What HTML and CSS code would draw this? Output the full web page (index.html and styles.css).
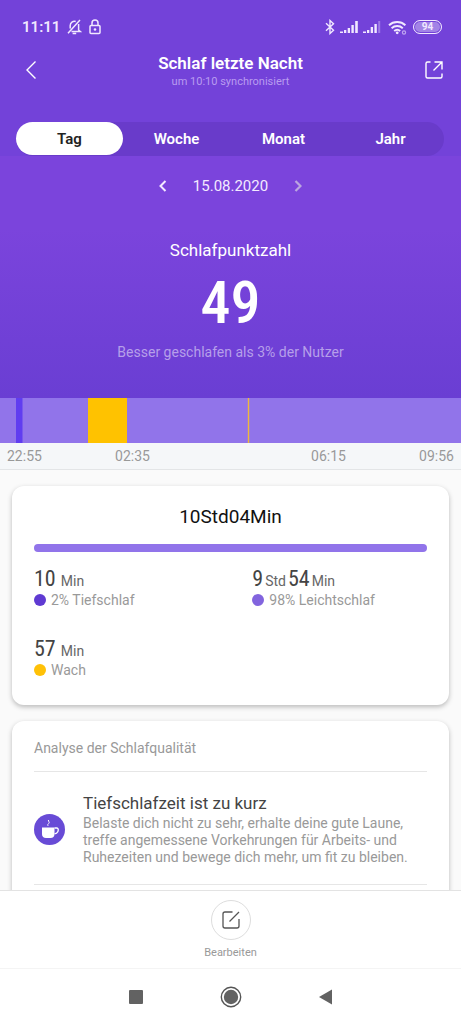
FILE: index.html
```html
<!DOCTYPE html>
<html lang="de">
<head>
<meta charset="utf-8">
<meta name="viewport" content="width=device-width, initial-scale=1">
<title>Schlaf letzte Nacht</title>
<link rel="stylesheet" href="styles.css">
</head>
<body>
<div class="app">
  <header class="top">
    <div class="status">
      <div class="status-group">
        <span class="clock">11:11</span>
        <svg width="15" height="16" viewBox="0 0 15 16" fill="none" stroke="currentColor" stroke-width="1.5"><path d="M3.200 9.500V6.500a4.300 4.300 0 0 1 5.500-4M11.600 5v6l1.600 1.400H4.500M1 14.200L13 1M5.600 14.400h3.600"/></svg>
        <svg width="12" height="16" viewBox="0 0 12 16" fill="none" stroke="currentColor" stroke-width="1.5"><rect x="1" y="6.5" width="10" height="8" rx="1"/><path d="M3 6.500V4a3 3 0 0 1 6 0v2.500"/><circle cx="6" cy="10.500" r="1.300" fill="currentColor" stroke="none"/></svg>
      </div>
      <div class="status-group signals">
        <svg width="10" height="16" viewBox="0 0 10 16" fill="none" stroke="currentColor" stroke-width="1.400"><path d="M1 4.300l7.500 7L5 14.500v-13l3.500 3.200L1 11.700"/></svg>
        <svg width="18" height="14" viewBox="0 0 18 14" fill="currentColor"><path d="M0 11.500h3V13H0zM4 10h2.300v3H4zM7.700 8H10v5H7.700zM11.400 5h2.400v8h-2.400zM15.200 1h2.600v12h-2.600z"/></svg>
        <svg width="18" height="14" viewBox="0 0 18 14" fill="currentColor"><path d="M0 11.500h3V13H0zM4 10h2.300v3H4zM7.700 7H10v6H7.700zM11.400 4h2.400v9h-2.400z"/><path d="M15.200 1h2v12h-2z" opacity=".35"/></svg>
        <svg class="wifi" width="19" height="15" viewBox="0 0 19 15" fill="none" stroke="currentColor" stroke-width="1.900"><path d="M1 5.300a12 12 0 0 1 16.400 0M3.600 8.200a8.200 8.200 0 0 1 11.200 0M6.200 11a4.500 4.500 0 0 1 6 0"/><circle cx="9.200" cy="12.800" r="1.400" fill="currentColor" stroke="none"/><circle cx="16" cy="12.500" r="1.600" stroke-width="1.200" opacity=".6"/></svg>
        <span class="battery">94</span>
      </div>
    </div>
    <div class="titlebar">
      <button class="icon-button" aria-label="Zurück"><svg width="12" height="20" viewBox="0 0 12 20" fill="none" stroke="currentColor" stroke-width="1.400"><path d="M10.500 1.500L2 10l8.500 8.500"/></svg></button>
      <div class="heading">
        <h1>Schlaf letzte Nacht</h1>
        <p>um 10:10 synchronisiert</p>
      </div>
      <button class="icon-button end" aria-label="Teilen"><svg width="18" height="18" viewBox="0 0 18 18" fill="none" stroke="currentColor" stroke-width="1.400"><path d="M5.500 1H2.500A1.500 1.500 0 0 0 1 2.500v13A1.500 1.500 0 0 0 2.500 17h13a1.500 1.500 0 0 0 1.500-1.500v-3M9.500 1H17v7.500M17 1L8.500 9.500"/></svg></button>
    </div>
    <nav class="tabs">
      <button class="tab active">Tag</button>
      <button class="tab">Woche</button>
      <button class="tab">Monat</button>
      <button class="tab">Jahr</button>
    </nav>
  </header>

  <main class="content">
    <section class="hero">
      <div class="date">
        <button aria-label="Vorheriger Tag"><svg width="8" height="12" viewBox="0 0 8 12" fill="none" stroke="currentColor" stroke-width="2"><path d="M6.500 1L1.500 6l5 5"/></svg></button>
        <span>15.08.2020</span>
        <button class="next" aria-label="Nächster Tag"><svg width="8" height="12" viewBox="0 0 8 12" fill="none" stroke="currentColor" stroke-width="2.200"><path d="M1.500 1l5 5-5 5"/></svg></button>
      </div>
      <h2>Schlafpunktzahl</h2>
      <div class="score">49</div>
      <p class="compare">Besser geschlafen als 3% der Nutzer</p>
    </section>

    <svg class="timeline" viewBox="0 0 461 44" preserveAspectRatio="none" aria-hidden="true"><path fill="#9174ea" d="M0 0h461v44H0z"/><path fill="#603df0" d="M16 0h6.500v44H16z"/><path fill="#ffc200" d="M88 0h39v44H88z"/><path fill="#efb83c" d="M247.800 0h1.400v44h-1.400z"/></svg>
    <div class="times"><span>22:55</span><span>02:35</span><span>06:15</span><span>09:56</span></div>

    <section class="card summary">
      <h2>10Std04Min</h2>
      <div class="bar"></div>
      <div class="stats">
        <div>
          <div class="value">10 <small>Min</small></div>
          <div class="legend deep">2% Tiefschlaf</div>
        </div>
        <div>
          <div class="value tight">9<small>Std</small>54<small>Min</small></div>
          <div class="legend light">98% Leichtschlaf</div>
        </div>
        <div>
          <div class="value">57 <small>Min</small></div>
          <div class="legend awake">Wach</div>
        </div>
      </div>
    </section>

    <section class="card analysis">
      <h2>Analyse der Schlafqualität</h2>
      <article class="tip">
        <svg width="31" height="31" viewBox="0 0 31 31"><circle cx="15.500" cy="15.500" r="15.500" fill="#684bd6"/><path fill="#fff" d="M8 13.500h12.500v6.500c0 2.500-1.500 4-4 4H12c-2.500 0-4-1.500-4-4z"/><path fill="none" stroke="#fff" stroke-width="1.300" d="M20.500 14h2.200c2.200 0 2 4-.2 5.200l-2 .8"/><path fill="none" stroke="#fff" d="M14.300 12c-2-2 2-2.500.6-4.200l-.6-1.800"/></svg>
        <div>
          <h3>Tiefschlafzeit ist zu kurz</h3>
          <p>Belaste dich nicht zu sehr, erhalte deine gute Laune, treffe angemessene Vorkehrungen für Arbeits- und Ruhezeiten und bewege dich mehr, um fit zu bleiben.</p>
        </div>
      </article>
    </section>
  </main>

  <footer class="actions">
    <button class="edit">
      <span class="edit-icon"><svg width="18" height="18" viewBox="0 0 18 18" fill="none" stroke="#555" stroke-width="1.300"><path d="M10.500 1H3a2 2 0 0 0-2 2v12a2 2 0 0 0 2 2h12a2 2 0 0 0 2-2V8M7.500 10.500L17 1"/></svg></span>
      Bearbeiten
    </button>
  </footer>
  <nav class="system">
    <button aria-label="Übersicht"><svg width="22" height="22" viewBox="0 0 22 22"><rect x="4" y="4" width="14" height="14" rx="1" fill="#626262"/></svg></button>
    <button aria-label="Startseite"><svg width="22" height="22" viewBox="0 0 22 22"><circle cx="11" cy="11" r="9.700" fill="none" stroke="#555" stroke-width="1.400"/><circle cx="11" cy="11" r="7.200" fill="#626262"/></svg></button>
    <button aria-label="Zurück"><svg width="22" height="22" viewBox="0 0 22 22"><path fill="#626262" d="M4 11L17 3.500v15z"/></svg></button>
  </nav>
</div>
</body>
</html>
```
FILE: styles.css
```css
* { box-sizing: border-box; }
body, h1, h2, h3, p { margin: 0; font-weight: 400; }
body { font-family: Roboto, "Noto Sans", sans-serif; background: #fafafa; }
button { font: inherit; color: inherit; border: 0; padding: 0; background: none; }
svg { display: block; flex: none; }

.app { display: flex; flex-direction: column; height: 100vh; }

.top { flex: none; background: #7342d9; color: #fff; }
.status { display: flex; justify-content: space-between; padding: 16px 19px 0 22px; height: 44px; color: #f1e8ff; }
.status-group { display: flex; align-items: center; gap: 7px; height: 22px; }
.signals { gap: 5px; }
.clock { font-size: 15px; font-weight: 600; }
.wifi { margin-left: 2px; }
.battery { margin-left: 1px; width: 29px; height: 14px; border: 1px solid #f1e8ff; border-radius: 7px; background: #a283e6; box-shadow: inset 0 0 0 1px #7342d9; font-size: 10px; line-height: 12px; font-weight: 700; text-align: center; }

.titlebar { display: grid; grid-template-columns: 48px 1fr 48px; align-items: center; padding: 0 18px 0 25px; height: 52px; }
.icon-button { height: 40px; }
.end { display: flex; align-items: center; justify-content: flex-end; }
.heading { text-align: center; padding-right: 7px; }
.heading h1 { font-size: 17px; line-height: 22px; font-weight: 600; }
.heading p { padding-top: 1px; font-size: 11px; line-height: 14px; color: #b99cf0; }

.tabs { display: grid; grid-template-columns: repeat(4, 1fr); margin: 26px 17px 0 16px; height: 34px; border-radius: 17px; background: #693bca; }
.tab { font-size: 15px; font-weight: 600; border-radius: 17px; }
.active { color: #222; background: #fff; height: 33px; }

.content { flex: 1; min-height: 0; overflow: hidden; }
.hero { display: flex; flex-direction: column; align-items: center; padding: 20px 0 37px; color: #fff; background: linear-gradient(#7b44dc 30%, #6a3ed3); }
.date { display: flex; align-items: center; gap: 26px; font-size: 15px; line-height: 20px; color: #f3eaff; }
.next { color: #bba5e0; }
.hero h2 { margin-top: 43px; font-size: 17px; line-height: 22px; }
.score { margin: 10px 0 8px; font-family: "Liberation Sans Narrow", "Roboto Condensed", Roboto, sans-serif; font-size: 60px; line-height: 64px; font-weight: 500; }
.compare { font-size: 14px; line-height: 18px; color: #b69fea; }

.timeline { width: 100%; height: 45px; }
.times { display: flex; justify-content: space-between; padding: 0 7px; height: 27px; align-items: center; font-size: 14px; color: #999; background: #f5f7f9; border-bottom: 1px solid #e3e5e7; }
.times span:nth-child(2) { margin-right: 88px; }

.card { margin: 16px 12px 0; padding: 0 22px; border-radius: 12px; background: #fff; box-shadow: 0 2px 5px rgba(0, 0, 0, .26); }
.summary { padding-top: 19px; padding-bottom: 27px; }
.summary h2 { font-size: 19px; line-height: 24px; text-align: center; color: #111; }
.bar { height: 8px; margin: 15px 0 16px; border-radius: 4px; background: #9174ea; }
.stats { display: grid; grid-template-columns: 5fr 4fr; row-gap: 30px; }
.value { font-family: "Roboto Condensed", Roboto, sans-serif; font-size: 22px; line-height: 22px; color: #444; }
.value small { font-family: Roboto, sans-serif; font-size: 14px; color: #666; }
.tight small { margin: 0 2px; }
.legend { display: flex; align-items: center; gap: 5px; font-size: 14px; line-height: 16px; color: #999; }
.legend::before { content: ""; width: 12px; height: 12px; border-radius: 50%; background: currentColor; }
.deep::before { background: #5f3ad2; }
.light::before { background: #8264de; }
.awake::before { background: #ffc107; }

.analysis { padding-bottom: 24px; }
.analysis h2 { padding: 17px 0 13px; font-size: 14px; line-height: 20px; color: #999; border-bottom: 1px solid #e6e6e6; }
.tip { display: flex; align-items: center; gap: 18px; padding: 20px 0 18px; border-bottom: 1px solid #e6e6e6; }
.tip h3 { font-size: 17px; line-height: 22px; color: #444; }
.tip p { margin-top: 1px; font-size: 14px; line-height: 17px; color: #999; }

.actions { flex: none; display: flex; justify-content: center; padding: 9px 0 6px; height: 78px; background: #fff; border-top: 1px solid #e3e3e3; }
.edit { display: flex; flex-direction: column; align-items: center; gap: 5px; font-size: 11px; line-height: 16px; color: #999; }
.edit-icon { flex: none; display: grid; place-items: center; width: 40px; height: 40px; border: 1px solid #ddd; border-radius: 50%; }
.system { flex: none; display: flex; justify-content: center; gap: 73px; height: 56px; background: #fff; border-top: 1px solid #f4f4f4; }
```
